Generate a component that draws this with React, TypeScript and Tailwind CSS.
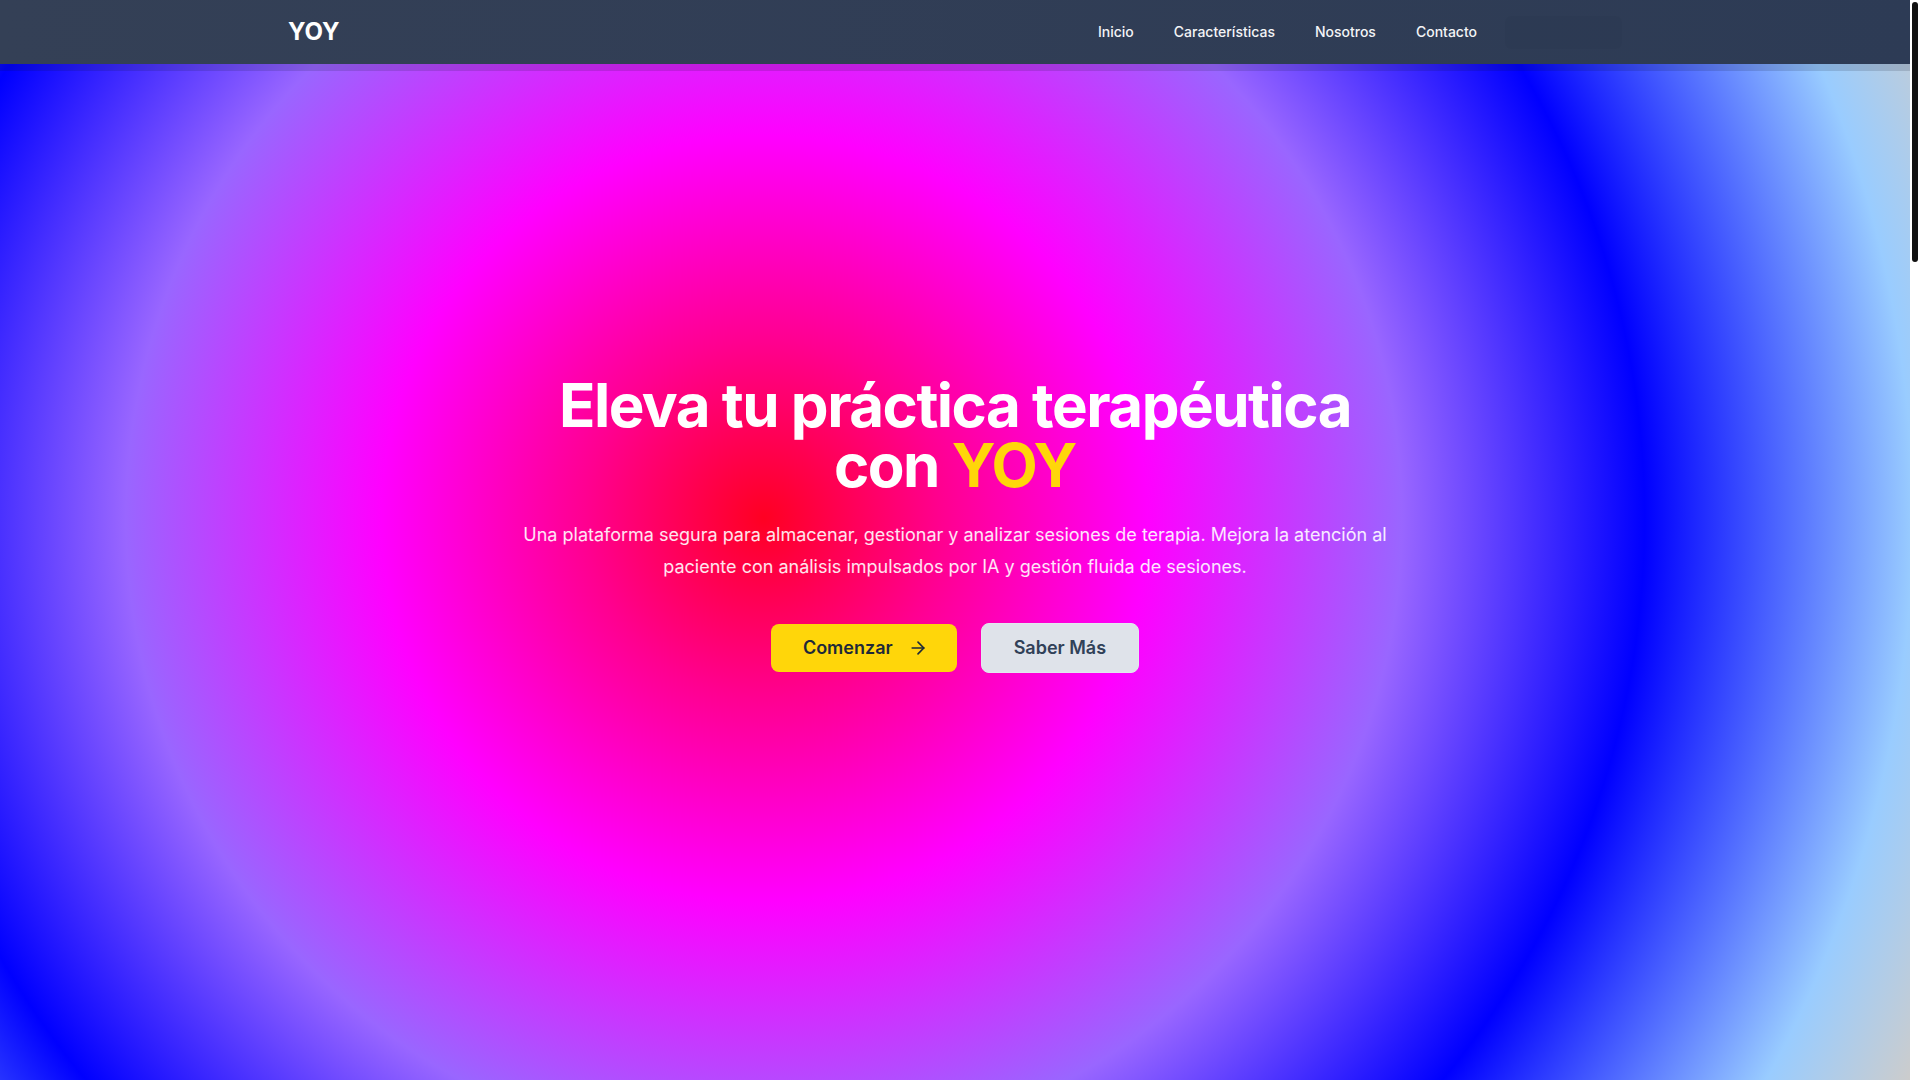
import React from "react";
import { ArrowRight } from "lucide-react";

function Nav() {
  return (
    <header className="fixed top-0 left-0 right-[10px] z-50 bg-slate-900/15">
      <nav className="h-16 bg-gradient-to-r from-[#344056] to-[#2d3b55]">
        <div className="w-[1334px] mx-auto h-full flex items-center justify-between">
          <a href="#" className="text-2xl font-bold text-white">
            YOY
          </a>
          <div className="flex items-center gap-4">
            {["Inicio", "Características", "Nosotros", "Contacto"].map((l) => (
              <a key={l} href="#" className="px-3 py-2 text-sm font-medium text-gray-100 rounded-md">
                {l}
              </a>
            ))}
            <div className="w-[117px] h-[33px] rounded-md bg-black/[0.025]"></div>
          </div>
        </div>
      </nav>
      <div className="h-[7px]"></div>
    </header>
  );
}

function Hero() {
  return (
    <section className="h-screen flex items-center justify-center pb-8 bg-[radial-gradient(circle_at_40%_48%,#ff0022_0%,#ff0090_14%,#ff00ff_30%,#9966ff_50%,#0000ff_69%,#99ccff_90%,#cccccc_100%)]">
      <div className="flex flex-col items-center text-center">
        <h1 className="text-6xl font-bold leading-none tracking-tight text-white">
          Eleva tu práctica terapéutica
          <br />
          con <span className="text-[#ffd60a]">YOY</span>
        </h1>
        <p className="mt-6 max-w-4xl text-lg leading-8 text-white/90">
          Una plataforma segura para almacenar, gestionar y analizar sesiones de terapia. Mejora la atención al paciente
          con análisis impulsados por IA y gestión fluida de sesiones.
        </p>
        <div className="mt-10 flex items-center gap-6">
          <button className="flex items-center pl-8 pr-[29px] py-2.5 rounded-lg bg-[#ffd60a] text-lg font-semibold text-gray-800">
            Comenzar
            <ArrowRight className="ml-[15px] w-5 h-5" strokeWidth={2} />
          </button>
          <button className="px-8 py-2.5 rounded-lg border border-slate-200 bg-[#dfe3ea] text-lg font-semibold text-slate-700">
            Saber Más
          </button>
        </div>
      </div>
    </section>
  );
}

function Features() {
  const items = [
    { t: "Almacenamiento seguro", d: "Tus sesiones protegidas con cifrado de extremo a extremo." },
    { t: "Análisis con IA", d: "Obtén información valiosa sobre el progreso de tus pacientes." },
    { t: "Gestión de sesiones", d: "Organiza y accede a tus sesiones de forma sencilla y rápida." },
  ];
  return (
    <section className="min-h-[1200px] bg-white py-32">
      <div className="max-w-6xl mx-auto px-6">
        <h2 className="text-4xl font-bold text-center text-gray-900">Características</h2>
        <div className="mt-16 grid grid-cols-3 gap-8">
          {items.map((i) => (
            <div key={i.t} className="rounded-xl bg-gray-50 p-8 shadow">
              <h3 className="text-xl font-semibold text-gray-900">{i.t}</h3>
              <p className="mt-3 text-gray-600">{i.d}</p>
            </div>
          ))}
        </div>
      </div>
    </section>
  );
}

function About() {
  return (
    <section className="min-h-[1000px] bg-gray-100 py-32">
      <div className="max-w-4xl mx-auto px-6 text-center">
        <h2 className="text-4xl font-bold text-gray-900">Nosotros</h2>
        <p className="mt-6 text-lg text-gray-600">
          Somos un equipo comprometido con la salud mental y la tecnología, creando herramientas para terapeutas.
        </p>
      </div>
    </section>
  );
}

function Contact() {
  return (
    <section className="min-h-[900px] bg-white py-32">
      <div className="max-w-xl mx-auto px-6 text-center">
        <h2 className="text-4xl font-bold text-gray-900">Contacto</h2>
        <p className="mt-6 text-lg text-gray-600">Escríbenos y te responderemos pronto.</p>
      </div>
    </section>
  );
}

function Footer() {
  return (
    <footer className="h-[300px] bg-slate-800 flex items-center justify-center text-gray-300 text-sm">
      © 2024 YOY. Todos los derechos reservados.
    </footer>
  );
}

export default function App() {
  return (
    <div className="h-screen flex font-['Inter',sans-serif]">
      <div className="flex-1 min-w-0 overflow-y-auto [scrollbar-width:none]">
        <Nav />
        <Hero />
        <Features />
        <About />
        <Contact />
        <Footer />
      </div>
      <div className="w-[10px] shrink-0 bg-white relative">
        <div className="absolute top-[2px] left-[2px] w-[6px] h-[260px] rounded-full bg-[#111111]"></div>
      </div>
    </div>
  );
}
